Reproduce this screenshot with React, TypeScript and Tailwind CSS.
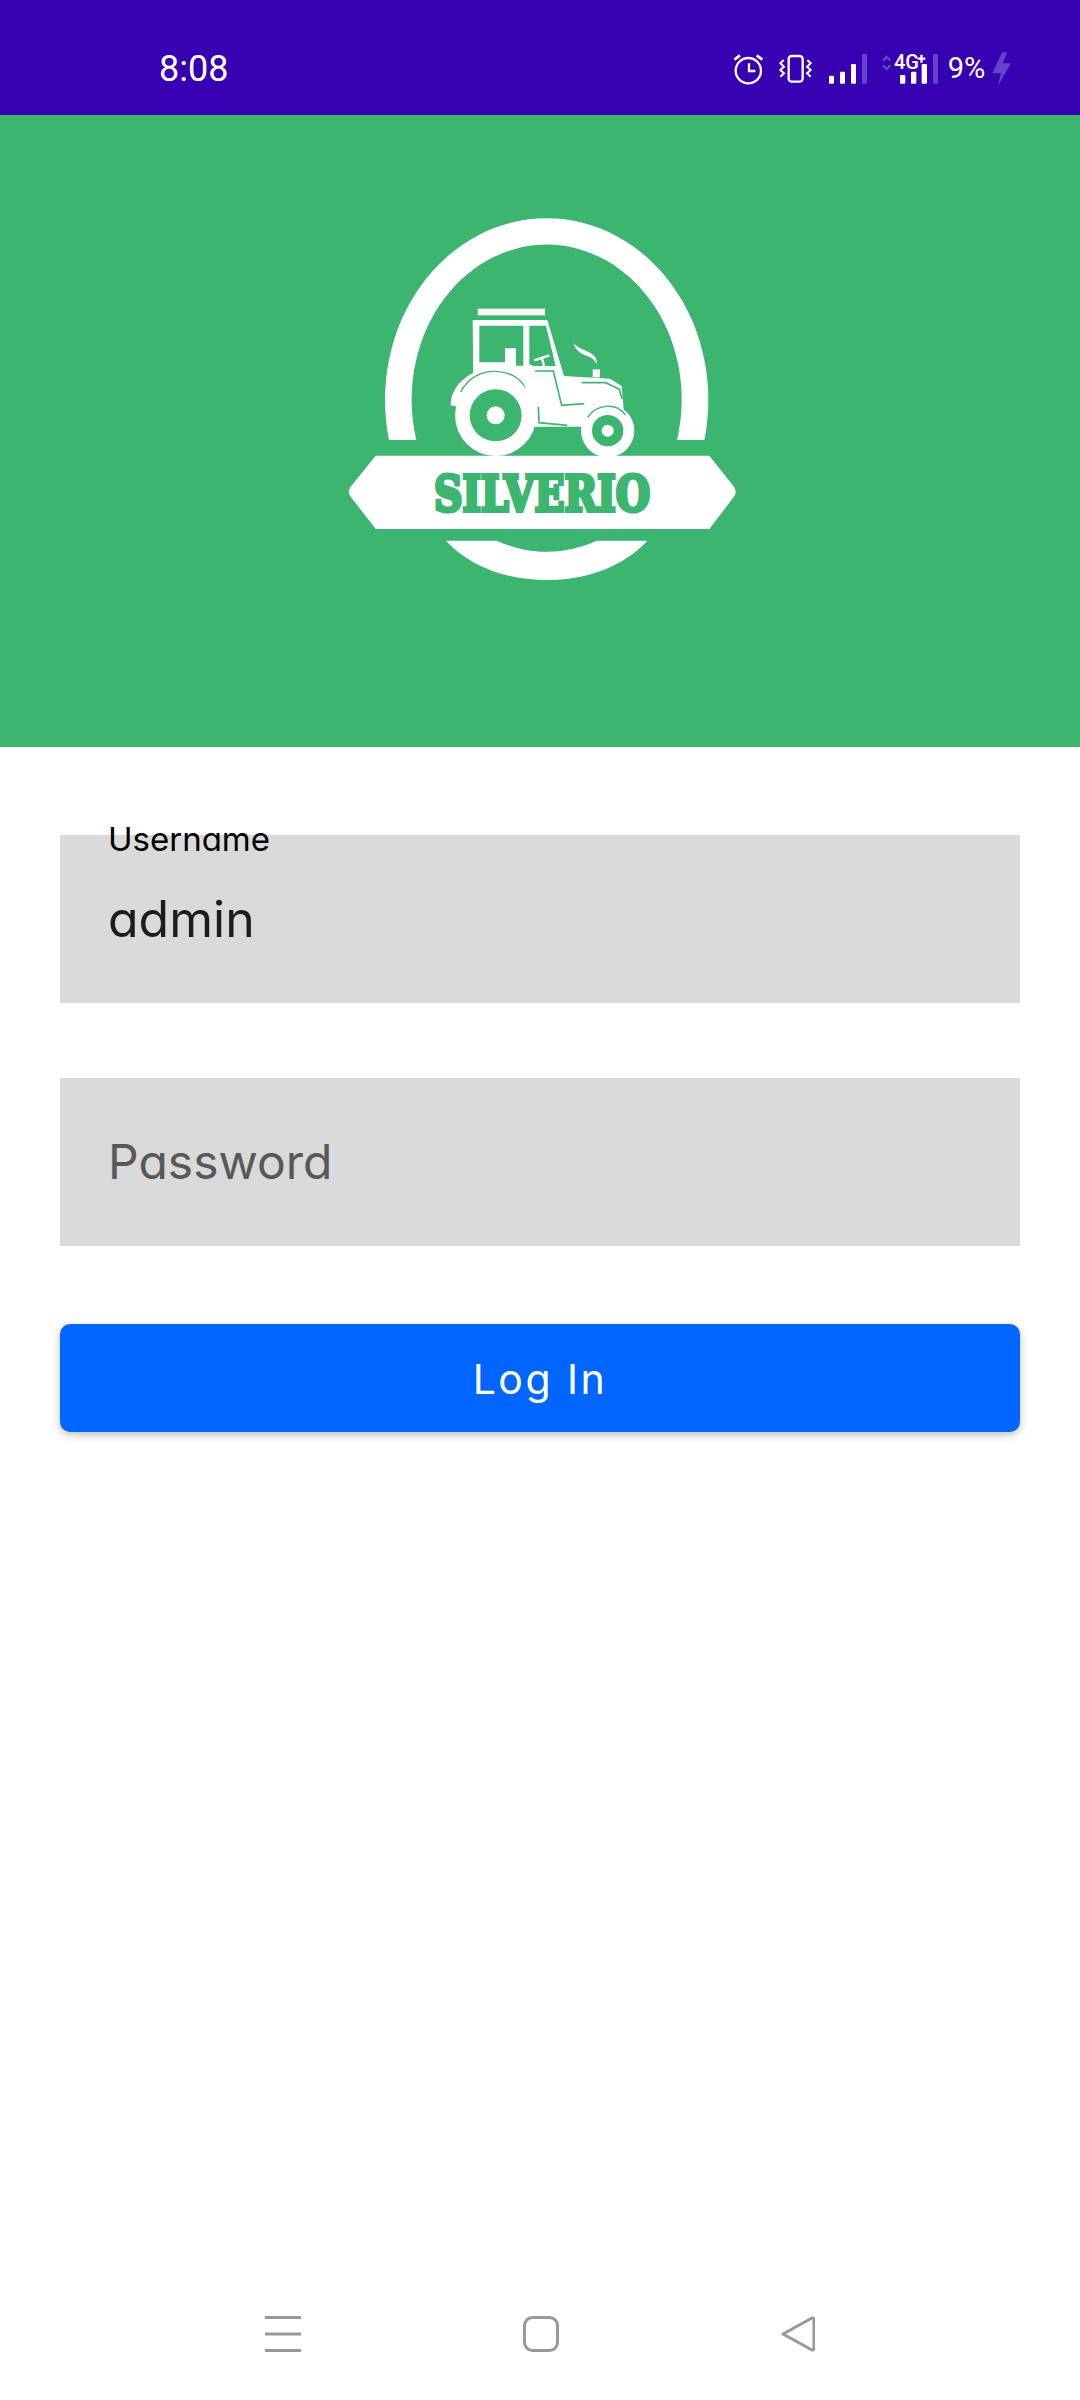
import React from 'react';

const uiFont = "font-['Inter','Noto_Sans',sans-serif] [font-feature-settings:'cv11']";

function StatusIcons() {
  const dim = '#6244c9';
  return (
    <svg width="340" height="80" viewBox="0 0 1020 240" fill="none">
      {/* alarm */}
      <circle cx="145" cy="152" r="38" stroke="#fff" strokeWidth="7" />
      <path d="M147 130V153H166" stroke="#fff" strokeWidth="7" />
      <path d="M103 119L120 106M170 106L187 119" stroke="#fff" strokeWidth="8" />
      {/* vibrate */}
      <rect x="266" y="108" width="42" height="77" rx="9" stroke="#fff" strokeWidth="7" />
      <path d="M251 120L241 130L252 140L241 150L252 160L241 170" stroke="#fff" strokeWidth="6" />
      <path d="M322 120L332 130L321 140L332 150L321 160L332 170" stroke="#fff" strokeWidth="6" />
      {/* signal 1 */}
      <rect x="387" y="167" width="15" height="24" rx="3" fill="#fff" />
      <rect x="420" y="155" width="15" height="36" rx="3" fill="#fff" />
      <rect x="453" y="132" width="15" height="59" rx="3" fill="#fff" />
      <rect x="486" y="102" width="15" height="89" rx="3" fill={dim} />
      {/* data arrows */}
      <path d="M549 122L560 111L571 122M549 136L560 147L571 136" stroke={dim} strokeWidth="7" />
      <text x="582" y="148" fill="#fff" fontFamily="Roboto, sans-serif" fontWeight="500" fontSize="60">4G</text>
      <path d="M653 116H676M664.500 104V128" stroke="#fff" strokeWidth="7" />
      {/* signal 2 */}
      <rect x="600" y="165" width="16" height="26" rx="3" fill="#fff" />
      <rect x="633" y="155" width="16" height="36" rx="3" fill="#fff" />
      <rect x="665" y="132" width="16" height="59" rx="3" fill="#fff" />
      <rect x="699" y="102" width="15" height="89" rx="3" fill={dim} />
      <text x="743" y="175" fill="#fff" fontFamily="Roboto, sans-serif" fontSize="87">9%</text>
      {/* charging bolt */}
      <path d="M906 97L877 160H903L893 199L933 130H908L922 97Z" fill={dim} />
    </svg>
  );
}

function Logo() {
  const green = '#3bb56f';
  return (
    <svg width="420" height="400" viewBox="0 0 1260 1200" fill="none">
      {/* arch */}
      <path d="M177 720A485 545 0 1 1 1123 720H1041A405 465 0 1 0 259 720Z" fill="#fff" />
      {/* bottom arc */}
      <path
        d="M348 1022H500C540 1040 590 1055 650 1055C710 1055 760 1040 800 1022H952C880 1100 770 1140 650 1140C530 1140 420 1100 348 1022Z"
        fill="#fff"
      />
      {/* ribbon */}
      <path
        d="M137 767H1138L1212 860Q1222 875 1212 890L1138 987H137L62 890Q50 875 62 860Z"
        fill="#fff"
      />
      <text
        x="312"
        y="932"
        textLength="648"
        lengthAdjust="spacingAndGlyphs"
        fill={green}
        stroke={green}
        strokeWidth="12"
        fontFamily="'DejaVu Serif', serif"
        fontWeight="900"
        fontSize="148"
      >
        SILVERIO
      </text>
      {/* tractor */}
      <g transform="translate(330 300)">
        <rect x="113" y="26" width="202" height="20" fill="#fff" />
        <path d="M98 60H322L372 228L510 236L545 258L552 340L440 380H260L100 250Z" fill="#fff" />
        <path d="M32 316C30 260 90 205 160 205C220 205 265 240 272 300L160 340Z" fill="#fff" />
        <path d="M118 77H250V197H228V145H195V187H118Z" fill={green} />
        <path d="M268 77H318L347 198H280L268 192Z" fill={green} />
        <path d="M283 181L328 166M306 175L312 198" stroke="#fff" strokeWidth="7" />
        <path d="M458 208H480V232H458Z" fill="#fff" />
        <path d="M400 130C420 148 436 150 452 160C466 168 472 178 470 192C462 174 448 170 432 164C416 158 406 146 400 130Z" fill="#fff" />
        <path d="M62 276C85 232 125 214 162 214C205 214 240 232 256 264" stroke={green} strokeWidth="4" />
        <path d="M285 213H340L365 316L432 311" stroke={green} strokeWidth="5" />
        <path d="M295 320L297 368L382 376" stroke={green} strokeWidth="5" />
        <path d="M425 248H497L538 268L546 296" stroke={green} strokeWidth="5" />
        <circle cx="167" cy="346" r="122" fill="#fff" />
        <circle cx="167" cy="346" r="78" fill={green} />
        <circle cx="167" cy="346" r="27" fill="#fff" />
        <circle cx="503" cy="392" r="80" fill="#fff" />
        <circle cx="503" cy="392" r="47" fill={green} />
        <circle cx="503" cy="392" r="18" fill="#fff" />
        <path d="M443 352C468 312 530 306 556 345" stroke={green} strokeWidth="4" />
      </g>
    </svg>
  );
}

export default function App() {
  return (
    <div className="flex min-h-[2400px] flex-col bg-white">
      {/* Status bar */}
      <div className="flex h-[115px] items-center justify-between bg-[#3700b3] pl-[159px] pr-[40px] pt-[5px]">
        <span className="mt-[18px] font-['Roboto',sans-serif] text-[36px] leading-none text-white">8:08</span>
        <StatusIcons />
      </div>

      {/* Logo */}
      <div className="flex h-[632px] justify-center bg-[#3bb56f] pt-[85px]">
        <div>
          <Logo />
        </div>
      </div>

      {/* Form */}
      <div className={`flex flex-col px-[60px] pt-[88px] ${uiFont}`}>
        <div className="relative flex h-[168px] items-center bg-[#dadada] pl-[48px]">
          <span className="absolute left-[48px] top-[-20px] text-[33px] leading-[48px] text-black">Username</span>
          <span className="text-[50px] leading-none text-[#1c1c1c]">admin</span>
        </div>
        <div className="mt-[75px] flex h-[168px] items-center bg-[#dadada] pl-[48px]">
          <span className="text-[48px] leading-none text-[#585858]">Password</span>
        </div>
        <button className="mt-[78px] h-[108px] rounded-[10px] bg-[#0066ff] pt-[3px] text-[41px] tracking-[2.500px] text-white shadow-[0_3px_8px_rgba(0,0,0,0.25)]">
          Log In
        </button>
      </div>

      {/* Nav bar */}
      <div className="mt-auto flex justify-center gap-[222px] pb-[48px]">
        <svg width="36" height="36" viewBox="0 0 36 36">
          <path d="M0 1.500H36M0 18H36M0 34.500H36" stroke="#999" strokeWidth="3" />
        </svg>
        <svg width="36" height="36" viewBox="0 0 36 36" fill="none">
          <rect x="1.500" y="1.500" width="33" height="33" rx="8" stroke="#999" strokeWidth="3" />
        </svg>
        <svg width="34" height="36" viewBox="0 0 34 36" fill="none">
          <path d="M31 2L2 18L31 34Q33 34.500 33 32V4Q33 1.500 31 2Z" stroke="#999" strokeWidth="3" strokeLinejoin="round" />
        </svg>
      </div>
    </div>
  );
}
